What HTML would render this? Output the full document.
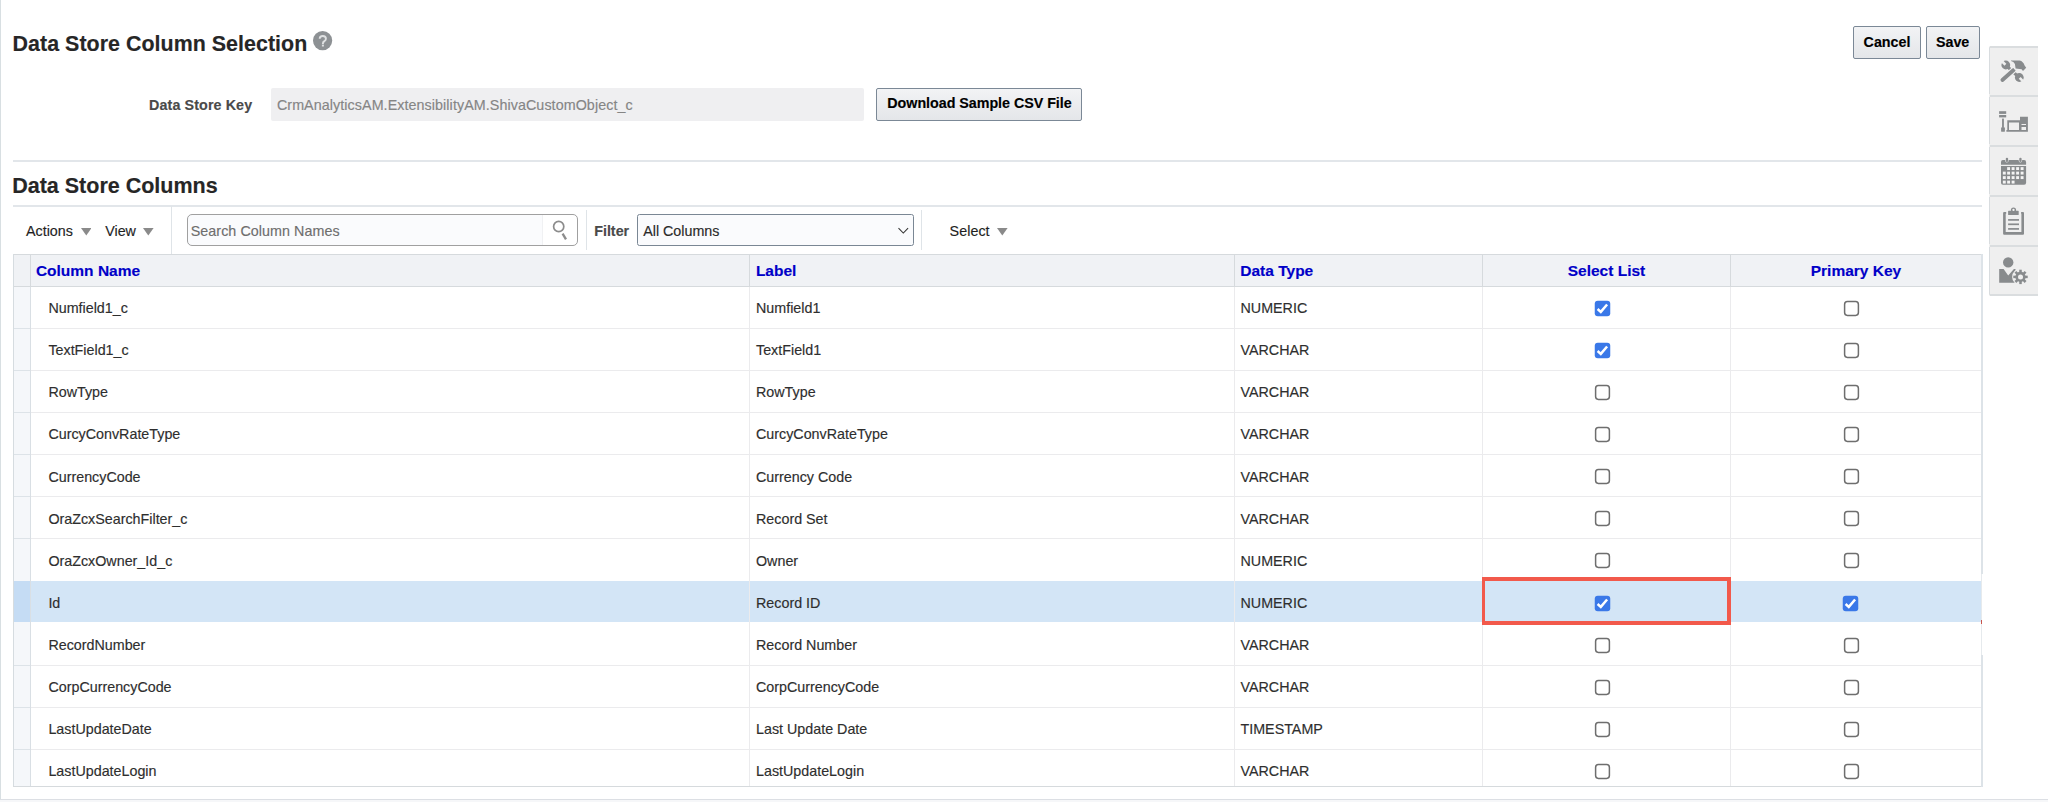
<!DOCTYPE html>
<html><head><meta charset="utf-8"><style>
html,body{margin:0;padding:0;background:#fff;width:2048px;height:802px;overflow:hidden;position:relative}
body{font-family:"Liberation Sans",sans-serif}
.a{position:absolute}
.t{position:absolute;white-space:nowrap;-webkit-text-stroke:0.15px currentColor}
.help{border-radius:50%;background:#8d9295;color:#fff;font-weight:bold;font-size:15px;line-height:19.5px;text-align:center}
</style></head><body>
<div class="a" style="left:0px;top:0px;width:1px;height:800px;background:#d8dfe2"></div>
<div class="a" style="left:0px;top:799px;width:2048px;height:1px;background:#dcdfe4"></div>
<div class="a" style="left:0px;top:800px;width:2048px;height:2px;background:#f6f7f9"></div>
<div class="t" style="left:12.60px;top:33.98px;font-size:21.4px;line-height:21.4px;color:#262626;font-weight:bold;letter-spacing:0.04px;">Data Store Column Selection</div>
<svg class="a" style="left:313.2px;top:31.2px" width="20" height="20" viewBox="0 0 20 20"><circle cx="9.6" cy="9.6" r="9.6" fill="#8d9194"/><path d="M6.7 7.7Q6.7 5.0 9.8 5.0Q12.9 5.0 12.9 7.7Q12.9 9.2 11.4 10.1Q9.9 11.0 9.9 12.4V12.9" fill="none" stroke="#dfe1e2" stroke-width="1.9"/><rect x="8.9" y="13.6" width="2" height="1.9" fill="#dfe1e2"/></svg>
<div class="a" style="left:1853px;top:26px;width:68px;height:33px;box-sizing:border-box;border:1px solid #7b8896;border-radius:2px;background:linear-gradient(#f2f3f5,#e4e6e9)"></div>
<div class="t" style="left:1863.60px;top:34.79px;font-size:14.3px;line-height:14.3px;color:#000;font-weight:bold;">Cancel</div>
<div class="a" style="left:1926px;top:26px;width:54px;height:33px;box-sizing:border-box;border:1px solid #7b8896;border-radius:2px;background:linear-gradient(#f2f3f5,#e4e6e9)"></div>
<div class="t" style="left:1935.90px;top:34.79px;font-size:14.3px;line-height:14.3px;color:#000;font-weight:bold;">Save</div>
<div class="t" style="left:149.10px;top:97.69px;font-size:14.3px;line-height:14.3px;color:#4a4a4a;font-weight:bold;letter-spacing:0.1px;">Data Store Key</div>
<div class="a" style="left:271px;top:88px;width:593px;height:33px;background:#efeff1;border-radius:2px"></div>
<div class="t" style="left:276.90px;top:97.99px;font-size:14.3px;line-height:14.3px;color:#858585;letter-spacing:0.077px;">CrmAnalyticsAM.ExtensibilityAM.ShivaCustomObject_c</div>
<div class="a" style="left:876px;top:88px;width:206px;height:33px;box-sizing:border-box;border:1px solid #7b8896;border-radius:2px;background:linear-gradient(#f2f3f5,#e4e6e9)"></div>
<div class="t" style="left:887.30px;top:96.39px;font-size:14.3px;line-height:14.3px;color:#000;font-weight:bold;letter-spacing:-0.03px;">Download Sample CSV File</div>
<div class="a" style="left:13px;top:160px;width:1969px;height:1.5px;background:#e2e6ea"></div>
<div class="t" style="left:12.20px;top:175.50px;font-size:21.5px;line-height:21.5px;color:#262626;font-weight:bold;">Data Store Columns</div>
<div class="a" style="left:13px;top:205.3px;width:1969px;height:1.5px;background:#e2e6ea"></div>
<div class="t" style="left:26.00px;top:223.79px;font-size:14.3px;line-height:14.3px;color:#1f1f1f;">Actions</div>
<svg class="a" style="left:80.7px;top:228px" width="10.6" height="7.5" viewBox="0 0 10.6 7.5"><path d="M0 0H10.6L5.3 7.5Z" fill="#8a8a8a"/></svg>
<div class="t" style="left:105.20px;top:223.79px;font-size:14.3px;line-height:14.3px;color:#1f1f1f;">View</div>
<svg class="a" style="left:143.1px;top:228px" width="10.6" height="7.5" viewBox="0 0 10.6 7.5"><path d="M0 0H10.6L5.3 7.5Z" fill="#8a8a8a"/></svg>
<div class="a" style="left:171px;top:206px;width:1px;height:48px;background:#dfe4e8"></div>
<div class="a" style="left:186.8px;top:214.2px;width:391px;height:32.2px;box-sizing:border-box;border-radius:5px;background:#fafbfd"></div>
<div class="a" style="left:542px;top:214.2px;width:35.8px;height:32.2px;background:#fff;border-radius:0 5px 5px 0"></div>
<div class="a" style="left:542px;top:215px;width:1px;height:30.6px;background:#f0f1f3"></div>
<div class="a" style="left:186.8px;top:214.2px;width:391px;height:32.2px;box-sizing:border-box;border:1px solid #a0a0a0;border-radius:5px"></div>
<div class="t" style="left:190.70px;top:223.89px;font-size:14.3px;line-height:14.3px;color:#6e6e6e;letter-spacing:0.06px;">Search Column Names</div>
<svg class="a" style="left:550px;top:219px" width="20" height="24" viewBox="0 0 20 24"><circle cx="8.7" cy="7.5" r="5.1" fill="none" stroke="#8c8c8c" stroke-width="1.7"/><path d="M12.6 14.6L16.0 20.4" stroke="#8c8c8c" stroke-width="2.3"/></svg>
<div class="a" style="left:585.5px;top:210px;width:1px;height:40px;background:#dfe4e8"></div>
<div class="t" style="left:594.20px;top:223.79px;font-size:14.3px;line-height:14.3px;color:#4a4a4a;font-weight:bold;">Filter</div>
<div class="a" style="left:637.2px;top:214.2px;width:277px;height:32.2px;box-sizing:border-box;border:1px solid #7a8794;border-radius:2.5px;background:#fafbfd"></div>
<div class="t" style="left:643.20px;top:223.79px;font-size:14.3px;line-height:14.3px;color:#2a2a2a;">All Columns</div>
<svg class="a" style="left:897px;top:226px" width="13" height="9" viewBox="0 0 13 9"><path d="M1.5 2.2L6.3 7.0L11.1 2.2" fill="none" stroke="#333" stroke-width="1.05"/></svg>
<div class="a" style="left:921px;top:210px;width:1px;height:40px;background:#dfe4e8"></div>
<div class="t" style="left:949.60px;top:223.79px;font-size:14.3px;line-height:14.3px;color:#1f1f1f;letter-spacing:0.05px;">Select</div>
<svg class="a" style="left:997.1px;top:228px" width="10.6" height="7.5" viewBox="0 0 10.6 7.5"><path d="M0 0H10.6L5.3 7.5Z" fill="#8a8a8a"/></svg>
<div class="a" style="left:13px;top:254px;width:1970px;height:32px;background:#f0f2f5"></div>
<div class="a" style="left:13px;top:286px;width:17px;height:500px;background:#f5f7fa"></div>
<div class="a" style="left:30px;top:581px;width:1951px;height:41px;background:#d3e5f6"></div>
<div class="a" style="left:13px;top:581px;width:17px;height:41px;background:#c5dcf4"></div>
<div class="a" style="left:13px;top:328px;width:17px;height:1px;background:#dde3e8"></div>
<div class="a" style="left:30px;top:328px;width:1951px;height:1px;background:#ebebed"></div>
<div class="a" style="left:13px;top:370px;width:17px;height:1px;background:#dde3e8"></div>
<div class="a" style="left:30px;top:370px;width:1951px;height:1px;background:#ebebed"></div>
<div class="a" style="left:13px;top:412px;width:17px;height:1px;background:#dde3e8"></div>
<div class="a" style="left:30px;top:412px;width:1951px;height:1px;background:#ebebed"></div>
<div class="a" style="left:13px;top:454px;width:17px;height:1px;background:#dde3e8"></div>
<div class="a" style="left:30px;top:454px;width:1951px;height:1px;background:#ebebed"></div>
<div class="a" style="left:13px;top:496px;width:17px;height:1px;background:#dde3e8"></div>
<div class="a" style="left:30px;top:496px;width:1951px;height:1px;background:#ebebed"></div>
<div class="a" style="left:13px;top:538px;width:17px;height:1px;background:#dde3e8"></div>
<div class="a" style="left:30px;top:538px;width:1951px;height:1px;background:#ebebed"></div>
<div class="a" style="left:13px;top:665px;width:17px;height:1px;background:#dde3e8"></div>
<div class="a" style="left:30px;top:665px;width:1951px;height:1px;background:#ebebed"></div>
<div class="a" style="left:13px;top:707px;width:17px;height:1px;background:#dde3e8"></div>
<div class="a" style="left:30px;top:707px;width:1951px;height:1px;background:#ebebed"></div>
<div class="a" style="left:13px;top:749px;width:17px;height:1px;background:#dde3e8"></div>
<div class="a" style="left:30px;top:749px;width:1951px;height:1px;background:#ebebed"></div>
<div class="a" style="left:30px;top:254px;width:1px;height:32px;background:#d6dadd"></div>
<div class="a" style="left:749px;top:254px;width:1px;height:32px;background:#d6dadd"></div>
<div class="a" style="left:1234px;top:254px;width:1px;height:32px;background:#d6dadd"></div>
<div class="a" style="left:1482px;top:254px;width:1px;height:32px;background:#d6dadd"></div>
<div class="a" style="left:1730px;top:254px;width:1px;height:32px;background:#d6dadd"></div>
<div class="a" style="left:30px;top:286px;width:1px;height:500px;background:#d9dfe4"></div>
<div class="a" style="left:749px;top:286px;width:1px;height:500px;background:#ebebed"></div>
<div class="a" style="left:1234px;top:286px;width:1px;height:500px;background:#ebebed"></div>
<div class="a" style="left:1482px;top:286px;width:1px;height:500px;background:#ebebed"></div>
<div class="a" style="left:1730px;top:286px;width:1px;height:500px;background:#ebebed"></div>
<div class="a" style="left:13px;top:254px;width:1968px;height:1px;background:#d6dadd"></div>
<div class="a" style="left:13px;top:286px;width:1968px;height:1px;background:#d6dadd"></div>
<div class="a" style="left:13px;top:254px;width:1px;height:532px;background:#d6dce0"></div>
<div class="a" style="left:1981px;top:254px;width:2px;height:320px;background:#dde3e8"></div>
<div class="a" style="left:1981px;top:574px;width:1px;height:81px;background:#e6eaed"></div>
<div class="a" style="left:1981px;top:655px;width:2px;height:132px;background:#dde3e8"></div>
<div class="a" style="left:1981px;top:620px;width:1px;height:3.5px;background:#c9554c"></div>
<div class="a" style="left:13px;top:786px;width:1968px;height:1px;background:#d6dadd"></div>
<div class="t" style="left:35.90px;top:262.68px;font-size:15.5px;line-height:15.5px;color:#0000c8;font-weight:bold;">Column Name</div>
<div class="t" style="left:755.90px;top:262.68px;font-size:15.5px;line-height:15.5px;color:#0000c8;font-weight:bold;">Label</div>
<div class="t" style="left:1240.30px;top:262.68px;font-size:15.5px;line-height:15.5px;color:#0000c8;font-weight:bold;">Data Type</div>
<div class="t" style="left:1483px;width:247px;text-align:center;top:262.68px;font-size:15.5px;line-height:15.5px;font-weight:bold;color:#0000c8">Select List</div>
<div class="t" style="left:1731px;width:250px;text-align:center;top:262.68px;font-size:15.5px;line-height:15.5px;font-weight:bold;color:#0000c8">Primary Key</div>
<div class="t" style="left:48.40px;top:301.19px;font-size:14.3px;line-height:14.3px;color:#2e2e2e;">Numfield1_c</div>
<div class="t" style="left:756.00px;top:301.19px;font-size:14.3px;line-height:14.3px;color:#2e2e2e;">Numfield1</div>
<div class="t" style="left:1240.50px;top:301.19px;font-size:14.3px;line-height:14.3px;color:#2e2e2e;">NUMERIC</div>
<svg class="a" style="left:1593.70px;top:300.00px" width="17" height="17" viewBox="0 0 17 17"><rect x="0.75" y="0.75" width="15.5" height="15.5" rx="3" fill="#3a78e8"/><path d="M3.6 9.0L6.8 11.9L13.1 4.5" fill="none" stroke="#fff" stroke-width="2.5"/></svg>
<svg class="a" style="left:1842.90px;top:300.00px" width="17" height="17" viewBox="0 0 17 17"><rect x="1.6" y="1.6" width="13.8" height="13.8" rx="2.8" fill="#fff" stroke="#6e6e6e" stroke-width="1.5"/></svg>
<div class="t" style="left:48.40px;top:343.27px;font-size:14.3px;line-height:14.3px;color:#2e2e2e;">TextField1_c</div>
<div class="t" style="left:756.00px;top:343.27px;font-size:14.3px;line-height:14.3px;color:#2e2e2e;">TextField1</div>
<div class="t" style="left:1240.50px;top:343.27px;font-size:14.3px;line-height:14.3px;color:#2e2e2e;">VARCHAR</div>
<svg class="a" style="left:1593.70px;top:342.08px" width="17" height="17" viewBox="0 0 17 17"><rect x="0.75" y="0.75" width="15.5" height="15.5" rx="3" fill="#3a78e8"/><path d="M3.6 9.0L6.8 11.9L13.1 4.5" fill="none" stroke="#fff" stroke-width="2.5"/></svg>
<svg class="a" style="left:1842.90px;top:342.08px" width="17" height="17" viewBox="0 0 17 17"><rect x="1.6" y="1.6" width="13.8" height="13.8" rx="2.8" fill="#fff" stroke="#6e6e6e" stroke-width="1.5"/></svg>
<div class="t" style="left:48.40px;top:385.35px;font-size:14.3px;line-height:14.3px;color:#2e2e2e;">RowType</div>
<div class="t" style="left:756.00px;top:385.35px;font-size:14.3px;line-height:14.3px;color:#2e2e2e;">RowType</div>
<div class="t" style="left:1240.50px;top:385.35px;font-size:14.3px;line-height:14.3px;color:#2e2e2e;">VARCHAR</div>
<svg class="a" style="left:1593.70px;top:384.16px" width="17" height="17" viewBox="0 0 17 17"><rect x="1.6" y="1.6" width="13.8" height="13.8" rx="2.8" fill="#fff" stroke="#6e6e6e" stroke-width="1.5"/></svg>
<svg class="a" style="left:1842.90px;top:384.16px" width="17" height="17" viewBox="0 0 17 17"><rect x="1.6" y="1.6" width="13.8" height="13.8" rx="2.8" fill="#fff" stroke="#6e6e6e" stroke-width="1.5"/></svg>
<div class="t" style="left:48.40px;top:427.43px;font-size:14.3px;line-height:14.3px;color:#2e2e2e;">CurcyConvRateType</div>
<div class="t" style="left:756.00px;top:427.43px;font-size:14.3px;line-height:14.3px;color:#2e2e2e;">CurcyConvRateType</div>
<div class="t" style="left:1240.50px;top:427.43px;font-size:14.3px;line-height:14.3px;color:#2e2e2e;">VARCHAR</div>
<svg class="a" style="left:1593.70px;top:426.24px" width="17" height="17" viewBox="0 0 17 17"><rect x="1.6" y="1.6" width="13.8" height="13.8" rx="2.8" fill="#fff" stroke="#6e6e6e" stroke-width="1.5"/></svg>
<svg class="a" style="left:1842.90px;top:426.24px" width="17" height="17" viewBox="0 0 17 17"><rect x="1.6" y="1.6" width="13.8" height="13.8" rx="2.8" fill="#fff" stroke="#6e6e6e" stroke-width="1.5"/></svg>
<div class="t" style="left:48.40px;top:469.51px;font-size:14.3px;line-height:14.3px;color:#2e2e2e;">CurrencyCode</div>
<div class="t" style="left:756.00px;top:469.51px;font-size:14.3px;line-height:14.3px;color:#2e2e2e;">Currency Code</div>
<div class="t" style="left:1240.50px;top:469.51px;font-size:14.3px;line-height:14.3px;color:#2e2e2e;">VARCHAR</div>
<svg class="a" style="left:1593.70px;top:468.32px" width="17" height="17" viewBox="0 0 17 17"><rect x="1.6" y="1.6" width="13.8" height="13.8" rx="2.8" fill="#fff" stroke="#6e6e6e" stroke-width="1.5"/></svg>
<svg class="a" style="left:1842.90px;top:468.32px" width="17" height="17" viewBox="0 0 17 17"><rect x="1.6" y="1.6" width="13.8" height="13.8" rx="2.8" fill="#fff" stroke="#6e6e6e" stroke-width="1.5"/></svg>
<div class="t" style="left:48.40px;top:511.59px;font-size:14.3px;line-height:14.3px;color:#2e2e2e;">OraZcxSearchFilter_c</div>
<div class="t" style="left:756.00px;top:511.59px;font-size:14.3px;line-height:14.3px;color:#2e2e2e;">Record Set</div>
<div class="t" style="left:1240.50px;top:511.59px;font-size:14.3px;line-height:14.3px;color:#2e2e2e;">VARCHAR</div>
<svg class="a" style="left:1593.70px;top:510.40px" width="17" height="17" viewBox="0 0 17 17"><rect x="1.6" y="1.6" width="13.8" height="13.8" rx="2.8" fill="#fff" stroke="#6e6e6e" stroke-width="1.5"/></svg>
<svg class="a" style="left:1842.90px;top:510.40px" width="17" height="17" viewBox="0 0 17 17"><rect x="1.6" y="1.6" width="13.8" height="13.8" rx="2.8" fill="#fff" stroke="#6e6e6e" stroke-width="1.5"/></svg>
<div class="t" style="left:48.40px;top:553.67px;font-size:14.3px;line-height:14.3px;color:#2e2e2e;">OraZcxOwner_Id_c</div>
<div class="t" style="left:756.00px;top:553.67px;font-size:14.3px;line-height:14.3px;color:#2e2e2e;">Owner</div>
<div class="t" style="left:1240.50px;top:553.67px;font-size:14.3px;line-height:14.3px;color:#2e2e2e;">NUMERIC</div>
<svg class="a" style="left:1593.70px;top:552.48px" width="17" height="17" viewBox="0 0 17 17"><rect x="1.6" y="1.6" width="13.8" height="13.8" rx="2.8" fill="#fff" stroke="#6e6e6e" stroke-width="1.5"/></svg>
<svg class="a" style="left:1842.90px;top:552.48px" width="17" height="17" viewBox="0 0 17 17"><rect x="1.6" y="1.6" width="13.8" height="13.8" rx="2.8" fill="#fff" stroke="#6e6e6e" stroke-width="1.5"/></svg>
<div class="t" style="left:48.40px;top:595.75px;font-size:14.3px;line-height:14.3px;color:#2e2e2e;">Id</div>
<div class="t" style="left:756.00px;top:595.75px;font-size:14.3px;line-height:14.3px;color:#2e2e2e;">Record ID</div>
<div class="t" style="left:1240.50px;top:595.75px;font-size:14.3px;line-height:14.3px;color:#2e2e2e;">NUMERIC</div>
<svg class="a" style="left:1593.70px;top:594.56px" width="17" height="17" viewBox="0 0 17 17"><rect x="0.75" y="0.75" width="15.5" height="15.5" rx="3" fill="#3a78e8"/><path d="M3.6 9.0L6.8 11.9L13.1 4.5" fill="none" stroke="#fff" stroke-width="2.5"/></svg>
<svg class="a" style="left:1841.90px;top:594.56px" width="17" height="17" viewBox="0 0 17 17"><rect x="0.75" y="0.75" width="15.5" height="15.5" rx="3" fill="#3a78e8"/><path d="M3.6 9.0L6.8 11.9L13.1 4.5" fill="none" stroke="#fff" stroke-width="2.5"/></svg>
<div class="t" style="left:48.40px;top:637.83px;font-size:14.3px;line-height:14.3px;color:#2e2e2e;">RecordNumber</div>
<div class="t" style="left:756.00px;top:637.83px;font-size:14.3px;line-height:14.3px;color:#2e2e2e;">Record Number</div>
<div class="t" style="left:1240.50px;top:637.83px;font-size:14.3px;line-height:14.3px;color:#2e2e2e;">VARCHAR</div>
<svg class="a" style="left:1593.70px;top:636.64px" width="17" height="17" viewBox="0 0 17 17"><rect x="1.6" y="1.6" width="13.8" height="13.8" rx="2.8" fill="#fff" stroke="#6e6e6e" stroke-width="1.5"/></svg>
<svg class="a" style="left:1842.90px;top:636.64px" width="17" height="17" viewBox="0 0 17 17"><rect x="1.6" y="1.6" width="13.8" height="13.8" rx="2.8" fill="#fff" stroke="#6e6e6e" stroke-width="1.5"/></svg>
<div class="t" style="left:48.40px;top:679.91px;font-size:14.3px;line-height:14.3px;color:#2e2e2e;">CorpCurrencyCode</div>
<div class="t" style="left:756.00px;top:679.91px;font-size:14.3px;line-height:14.3px;color:#2e2e2e;">CorpCurrencyCode</div>
<div class="t" style="left:1240.50px;top:679.91px;font-size:14.3px;line-height:14.3px;color:#2e2e2e;">VARCHAR</div>
<svg class="a" style="left:1593.70px;top:678.72px" width="17" height="17" viewBox="0 0 17 17"><rect x="1.6" y="1.6" width="13.8" height="13.8" rx="2.8" fill="#fff" stroke="#6e6e6e" stroke-width="1.5"/></svg>
<svg class="a" style="left:1842.90px;top:678.72px" width="17" height="17" viewBox="0 0 17 17"><rect x="1.6" y="1.6" width="13.8" height="13.8" rx="2.8" fill="#fff" stroke="#6e6e6e" stroke-width="1.5"/></svg>
<div class="t" style="left:48.40px;top:721.99px;font-size:14.3px;line-height:14.3px;color:#2e2e2e;">LastUpdateDate</div>
<div class="t" style="left:756.00px;top:721.99px;font-size:14.3px;line-height:14.3px;color:#2e2e2e;">Last Update Date</div>
<div class="t" style="left:1240.50px;top:721.99px;font-size:14.3px;line-height:14.3px;color:#2e2e2e;">TIMESTAMP</div>
<svg class="a" style="left:1593.70px;top:720.80px" width="17" height="17" viewBox="0 0 17 17"><rect x="1.6" y="1.6" width="13.8" height="13.8" rx="2.8" fill="#fff" stroke="#6e6e6e" stroke-width="1.5"/></svg>
<svg class="a" style="left:1842.90px;top:720.80px" width="17" height="17" viewBox="0 0 17 17"><rect x="1.6" y="1.6" width="13.8" height="13.8" rx="2.8" fill="#fff" stroke="#6e6e6e" stroke-width="1.5"/></svg>
<div class="t" style="left:48.40px;top:764.07px;font-size:14.3px;line-height:14.3px;color:#2e2e2e;">LastUpdateLogin</div>
<div class="t" style="left:756.00px;top:764.07px;font-size:14.3px;line-height:14.3px;color:#2e2e2e;">LastUpdateLogin</div>
<div class="t" style="left:1240.50px;top:764.07px;font-size:14.3px;line-height:14.3px;color:#2e2e2e;">VARCHAR</div>
<svg class="a" style="left:1593.70px;top:762.88px" width="17" height="17" viewBox="0 0 17 17"><rect x="1.6" y="1.6" width="13.8" height="13.8" rx="2.8" fill="#fff" stroke="#6e6e6e" stroke-width="1.5"/></svg>
<svg class="a" style="left:1842.90px;top:762.88px" width="17" height="17" viewBox="0 0 17 17"><rect x="1.6" y="1.6" width="13.8" height="13.8" rx="2.8" fill="#fff" stroke="#6e6e6e" stroke-width="1.5"/></svg>
<div class="a" style="left:1482px;top:577px;width:249px;height:48px;box-sizing:border-box;border:4px solid #f2594b;border-left-width:3px"></div>
<div class="a" style="left:1989px;top:46px;width:49px;height:250px;background:#efefef;border-radius:3px 0 0 3px"></div>
<div class="a" style="left:1989px;top:48px;width:1px;height:46px;background:#d8dcdf"></div>
<div class="a" style="left:1989px;top:97px;width:1px;height:47px;background:#d8dcdf"></div>
<div class="a" style="left:1989px;top:147px;width:1px;height:47px;background:#d8dcdf"></div>
<div class="a" style="left:1989px;top:197px;width:1px;height:47px;background:#d8dcdf"></div>
<div class="a" style="left:1989px;top:247px;width:1px;height:47px;background:#d8dcdf"></div>
<div class="a" style="left:1990px;top:46px;width:48px;height:2px;background:#dadddf"></div>
<div class="a" style="left:1990px;top:95px;width:48px;height:2px;background:#dadddf"></div>
<div class="a" style="left:1990px;top:145px;width:48px;height:2px;background:#dadddf"></div>
<div class="a" style="left:1990px;top:195px;width:48px;height:2px;background:#dadddf"></div>
<div class="a" style="left:1990px;top:245px;width:48px;height:2px;background:#dadddf"></div>
<div class="a" style="left:1990px;top:294px;width:48px;height:2px;background:#dadddf"></div>
<div class="a" style="left:1989px;top:46px;width:49px;height:2px;background:#dadddf;border-top-left-radius:3px"></div>
<div class="a" style="left:1989px;top:294px;width:49px;height:2px;background:#dadddf;border-bottom-left-radius:3px"></div>
<svg class="a" style="left:1996px;top:56px" width="36" height="30" viewBox="0 0 36 30">
<g fill="#888b8d">
<path d="M10.0 9.3L23.0 21.4" stroke="#888b8d" stroke-width="3.2"/>
<circle cx="9.8" cy="9.0" r="4.4"/>
<circle cx="23.3" cy="21.5" r="4.4"/>
</g>
<g fill="#efefef">
<rect x="-1.3" y="-3.0" width="2.6" height="6.0" transform="translate(7.3 6.6) rotate(-45)"/>
<rect x="-1.3" y="-3.0" width="2.6" height="6.0" transform="translate(25.8 24.0) rotate(-45)"/>
</g>
<path d="M6.4 24.0L17.6 14.0" stroke="#efefef" stroke-width="6.3" stroke-linecap="round"/>
<path d="M6.4 24.0L17.6 14.0" stroke="#888b8d" stroke-width="3.8" stroke-linecap="round"/>
<path d="M18.4 13.3L20.3 11.6" stroke="#efefef" stroke-width="2.6"/>
<path d="M15.0 4.4L23.6 4.4Q27.2 5.2 28.6 9.4L30.2 11.8L27.0 15.0L25.6 13.3L19.6 12.5L18.9 8.0Q17.8 5.6 15.0 5.0Z" fill="#888b8d"/>
</svg>
<svg class="a" style="left:1994px;top:106px" width="40" height="30" viewBox="0 0 40 30">
<g fill="#888b8d">
<rect x="5.1" y="5.2" width="7.1" height="2.7"/>
<rect x="5.1" y="9.0" width="7.1" height="2.4"/>
<rect x="8.05" y="12.6" width="1.85" height="9.2"/>
<rect x="7.1" y="21.3" width="3.8" height="4.5" rx="0.9"/>
<path fill-rule="evenodd" d="M13.3 14.2H26V10.7H33.9V25.8H12.4V23.9H13.3ZM15.0 16.6V24.0H25.0V16.6ZM27.5 18V19.1H32V18ZM27.5 21V24H32V21Z"/>
</g>
</svg>
<svg class="a" style="left:1996px;top:152px" width="36" height="38" viewBox="0 0 36 38">
<path d="M5 10Q5 8.1 6.9 8.1H28.2Q30.1 8.1 30.1 10V12.8H5Z" fill="#888b8d"/>
<path d="M5 13.9H30.1V30.8Q30.1 32.7 28.2 32.7H6.9Q5 32.7 5 30.8Z" fill="#888b8d"/>
<rect x="9.2" y="5.2" width="3.4" height="5.3" rx="1.7" fill="#efefef"/>
<rect x="22.7" y="5.2" width="3.4" height="5.3" rx="1.7" fill="#efefef"/>
<rect x="9.8" y="5.7" width="2.3" height="4.4" rx="1.1" fill="#888b8d"/>
<rect x="23.3" y="5.7" width="2.3" height="4.4" rx="1.1" fill="#888b8d"/>
<g fill="#f4f4f4"><rect x="11.15" y="15.15" width="2.9" height="2.9"/><rect x="15.65" y="15.15" width="2.9" height="2.9"/><rect x="20.15" y="15.15" width="2.9" height="2.9"/><rect x="24.65" y="15.15" width="2.9" height="2.9"/><rect x="6.85" y="19.65" width="2.9" height="2.9"/><rect x="11.15" y="19.65" width="2.9" height="2.9"/><rect x="15.65" y="19.65" width="2.9" height="2.9"/><rect x="20.15" y="19.65" width="2.9" height="2.9"/><rect x="24.65" y="19.65" width="2.9" height="2.9"/><rect x="6.85" y="24.15" width="2.9" height="2.9"/><rect x="11.15" y="24.15" width="2.9" height="2.9"/><rect x="15.65" y="24.15" width="2.9" height="2.9"/><rect x="20.15" y="24.15" width="2.9" height="2.9"/><rect x="24.65" y="24.15" width="2.9" height="2.9"/><rect x="6.85" y="28.65" width="2.9" height="2.9"/><rect x="11.15" y="28.65" width="2.9" height="2.9"/><rect x="15.65" y="28.65" width="2.9" height="2.9"/></g>
</svg>
<svg class="a" style="left:1996px;top:202px" width="36" height="38" viewBox="0 0 36 38">
<path fill="#888b8d" fill-rule="evenodd" d="M8.1 10H10.2V11.7H9.7V30.1H25.4V11.7H25.1V10H27Q28 10 28 11V31.7Q28 32.7 27 32.7H8.1Q7.1 32.7 7.1 31.7V11Q7.1 10 8.1 10Z"/>
<circle cx="17.5" cy="8.0" r="2.6" fill="#888b8d"/>
<rect x="12.1" y="8.8" width="10.6" height="4.2" rx="0.6" fill="#888b8d"/>
<circle cx="17.5" cy="7.9" r="1.15" fill="#f4f4f4"/>
<g fill="#888b8d"><rect x="12.1" y="17.05" width="10.9" height="1.7"/><rect x="12.1" y="21.45" width="10.9" height="1.7"/><rect x="12.1" y="26.05" width="10.9" height="1.7"/></g>
</svg>
<svg class="a" style="left:1994px;top:252px" width="40" height="38" viewBox="0 0 40 38">
<circle cx="14.2" cy="10.4" r="5.2" fill="#888b8d"/>
<path d="M5.2 17.1H9.6L14.2 23.6L19.9 17.1H21.5V30.8H5.2Z" fill="#888b8d"/>
<circle cx="26.5" cy="24.9" r="8.4" fill="#efefef"/>
<g transform="translate(26.5 24.9)" fill="#888b8d"><rect x="-1.25" y="-7.2" width="2.5" height="4" transform="rotate(0)"/><rect x="-1.25" y="-7.2" width="2.5" height="4" transform="rotate(45)"/><rect x="-1.25" y="-7.2" width="2.5" height="4" transform="rotate(90)"/><rect x="-1.25" y="-7.2" width="2.5" height="4" transform="rotate(135)"/><rect x="-1.25" y="-7.2" width="2.5" height="4" transform="rotate(180)"/><rect x="-1.25" y="-7.2" width="2.5" height="4" transform="rotate(225)"/><rect x="-1.25" y="-7.2" width="2.5" height="4" transform="rotate(270)"/><rect x="-1.25" y="-7.2" width="2.5" height="4" transform="rotate(315)"/><circle r="5.1"/></g>
<circle cx="26.5" cy="24.9" r="2.5" fill="#efefef"/>
</svg>
</body></html>
